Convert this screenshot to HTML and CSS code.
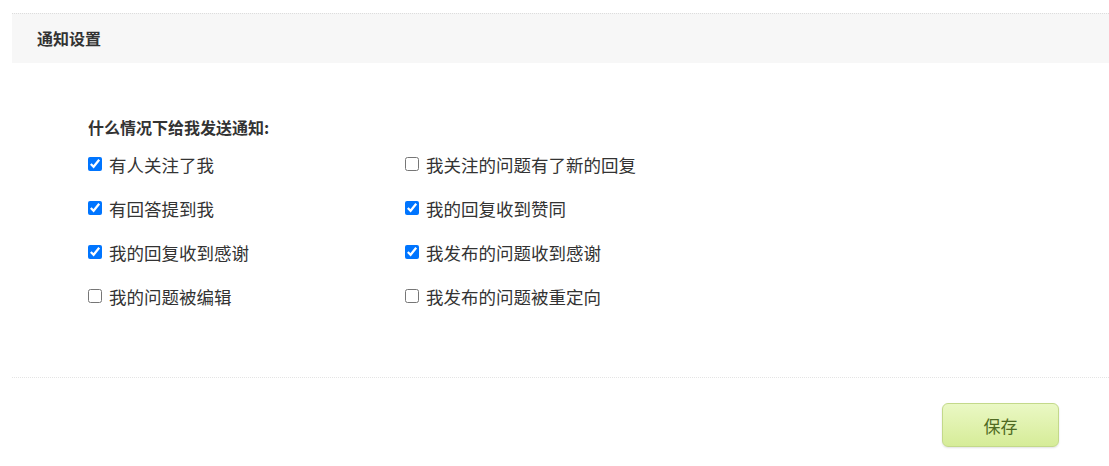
FILE: index.html
```html
<!DOCTYPE html>
<html lang="zh-CN">
<head>
    <meta charset="UTF-8">
    <title>通知设置</title>
    <link rel="stylesheet" href="styles.css">
</head>
<body>
    <div class="panel">
        <div class="panel-head">通知设置</div>
        <div class="panel-body">
            <div class="notify-title">什么情况下给我发送通知:</div>
            <div class="notify-grid">
                <label class="notify-item"><input type="checkbox" checked>有人关注了我</label>
                <label class="notify-item"><input type="checkbox">我关注的问题有了新的回复</label>
                <label class="notify-item"><input type="checkbox" checked>有回答提到我</label>
                <label class="notify-item"><input type="checkbox" checked>我的回复收到赞同</label>
                <label class="notify-item"><input type="checkbox" checked>我的回复收到感谢</label>
                <label class="notify-item"><input type="checkbox" checked>我发布的问题收到感谢</label>
                <label class="notify-item"><input type="checkbox">我的问题被编辑</label>
                <label class="notify-item"><input type="checkbox">我发布的问题被重定向</label>
            </div>
        </div>
        <div class="panel-foot">
            <button class="btn-save" type="button">保存</button>
        </div>
    </div>
</body>
</html>
```

FILE: styles.css
```css
body {
    margin: 0;
    font-family: "Noto Sans CJK SC", "Liberation Sans", sans-serif;
    color: #333;
    background: #fff;
}

.panel {
    margin: 13px 0 0 12px;
}

.panel-head {
    height: 49px;
    line-height: 49px;
    padding-left: 25px;
    border-top: 1px dotted #ddd;
    background: #f7f7f7;
    font-size: 16px;
    font-weight: bold;
    color: #333;
}

.panel-body {
    padding: 53px 0 59px 76px;
}

.notify-title {
    font-size: 16px;
    font-weight: bold;
    line-height: 22px;
    margin-bottom: 4px;
}

.notify-grid {
    display: grid;
    grid-template-columns: 317px 317px;
    grid-auto-rows: 44px;
}

.notify-item {
    display: flex;
    align-items: center;
    font-size: 17.5px;
    color: #333;
}

.notify-item input {
    width: 14px;
    height: 14px;
    margin: 0 7px 0 0;
}

.panel-foot {
    border-top: 1px dotted #e4e4e4;
    padding: 25px 50px 20px 0;
    display: flex;
    justify-content: flex-end;
}

.btn-save {
    width: 117px;
    height: 44px;
    border: 1px solid #c3d98a;
    border-radius: 6px;
    background: linear-gradient(#eaf8c4, #d6ec98);
    box-shadow: 0 1px 2px rgba(0, 0, 0, 0.12);
    font-family: "Noto Sans CJK SC", sans-serif;
    font-size: 17px;
    color: #4f6a22;
}
```
